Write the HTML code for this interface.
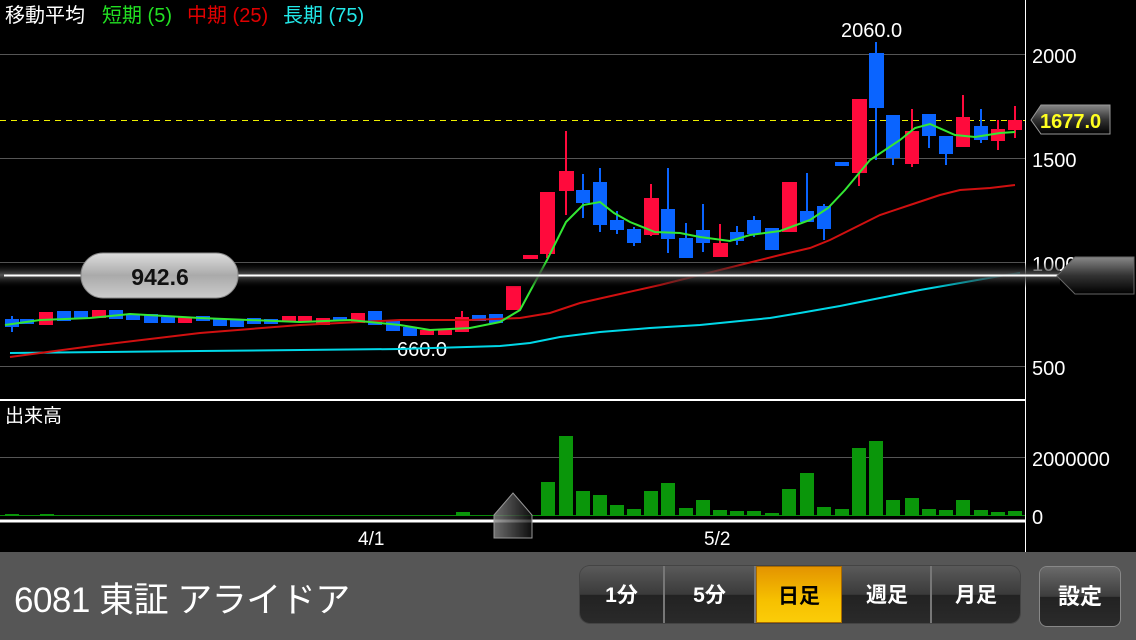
<!DOCTYPE html>
<html><head><meta charset="utf-8"><style>
html,body{margin:0;padding:0;background:#000;width:1136px;height:640px;overflow:hidden;font-family:"Liberation Sans","Noto Sans CJK JP",sans-serif}
.bar{position:absolute;left:0;top:552px;width:1136px;height:88px;background:#565656}
.title{position:absolute;left:14px;top:572px;color:#fff;font-size:35px;letter-spacing:-0.5px}
.grp{position:absolute;left:580px;top:566px;width:440px;height:57px;border-radius:10px;background:linear-gradient(#5a5a5a,#3a3a3a 50%,#222 51%,#2a2a2a);overflow:hidden;box-shadow:0 0 0 1px #444}
.seg{position:absolute;top:0;height:57px;color:#fff;font-size:21px;font-weight:bold;text-align:center;line-height:60px;border-right:2px solid #777;box-sizing:border-box}
.sel{background:linear-gradient(#e49400,#f6c000 60%,#fbcc08);color:#000;border:1px solid #a86a00}
.set{position:absolute;left:1040px;top:567px;width:80px;height:59px;border-radius:7px;background:linear-gradient(#6a6a6a,#3d3d3d 50%,#222 51%,#2b2b2b);color:#fff;font-size:22px;font-weight:bold;text-align:center;line-height:60px;box-shadow:0 0 0 1px #888}
</style></head><body>
<svg width="1136" height="552" style="position:absolute;left:0;top:0" font-family="Liberation Sans, Noto Sans CJK JP, sans-serif">
<text x="5" y="22" fill="#fff" font-size="20">移動平均</text>
<text x="102" y="22" fill="#22e022" font-size="20">短期 (5)</text>
<text x="187" y="22" fill="#e00000" font-size="20">中期 (25)</text>
<text x="283" y="22" fill="#22e8e8" font-size="20">長期 (75)</text>
<g stroke="#555" stroke-width="1">
<line x1="0" y1="54.5" x2="1025" y2="54.5"/><line x1="0" y1="158.5" x2="1025" y2="158.5"/>
<line x1="0" y1="262.5" x2="1025" y2="262.5"/><line x1="0" y1="366.5" x2="1025" y2="366.5"/>
<line x1="0" y1="457.5" x2="1025" y2="457.5"/>
</g>
<line x1="0" y1="120.5" x2="1025" y2="120.5" stroke="#f0f000" stroke-width="1" stroke-dasharray="6,5"/>
<line x1="1025.5" y1="0" x2="1025.5" y2="552" stroke="#fff" stroke-width="1"/>
<line x1="0" y1="400" x2="1025" y2="400" stroke="#fff" stroke-width="2"/>
<line x1="0" y1="521" x2="1025" y2="521" stroke="#fff" stroke-width="3"/>
<g fill="#fff" font-size="20">
<text x="1032" y="63">2000</text><text x="1032" y="167">1500</text><text x="1032" y="271">1000</text><text x="1032" y="375">500</text>
<text x="1032" y="466">2000000</text><text x="1032" y="524">0</text>
<text x="841" y="37">2060.0</text><text x="397" y="356">660.0</text>
<text x="5" y="422" font-size="19">出来高</text>
<text x="358" y="545" font-size="19">4/1</text><text x="704" y="545" font-size="19">5/2</text>
</g>
<g stroke-width="2">
<g fill="#0a64ff" stroke="#0a64ff">
<line x1="12" y1="316" x2="12" y2="332"/><rect x="6" y="320" width="12" height="6"/>
<rect x="21" y="320" width="12" height="3"/><rect x="58" y="312" width="12" height="8"/><rect x="75" y="312" width="12" height="6"/>
<rect x="110" y="311" width="12" height="7"/><rect x="127" y="315" width="12" height="4"/><rect x="145" y="315" width="12" height="7"/>
<rect x="162" y="318" width="12" height="4"/><rect x="197" y="317" width="12" height="3"/><rect x="214" y="320" width="12" height="5"/>
<rect x="231" y="320" width="12" height="6"/><rect x="248" y="319" width="12" height="4"/><rect x="265" y="320" width="12" height="3"/>
<rect x="334" y="318" width="12" height="2"/><rect x="369" y="312" width="12" height="12"/><rect x="387" y="322" width="12" height="8"/>
<rect x="404" y="328" width="12" height="7"/><rect x="473" y="316" width="12" height="4"/><rect x="490" y="315" width="12" height="7"/>
</g>
<g fill="#ff0a3c" stroke="#ff0a3c">
<rect x="40" y="313" width="12" height="11"/><rect x="93" y="311" width="12" height="6"/><rect x="179" y="318" width="12" height="4"/>
<rect x="283" y="317" width="12" height="4"/><rect x="299" y="317" width="12" height="4"/><rect x="317" y="319" width="12" height="5"/>
<rect x="352" y="314" width="12" height="8"/><rect x="421" y="331" width="12" height="3"/><rect x="439" y="331" width="12" height="3"/>
<line x1="462" y1="311" x2="462" y2="332"/><rect x="456" y="318" width="12" height="13"/>
<rect x="507" y="287" width="13" height="22"/><rect x="524" y="256" width="13" height="2"/>
<line x1="547" y1="193" x2="547" y2="258"/><rect x="541" y="193" width="13" height="60"/>
<line x1="566" y1="131" x2="566" y2="215"/><rect x="560" y="172" width="13" height="18"/>
<line x1="651" y1="184" x2="651" y2="236"/><rect x="645" y="199" width="13" height="35"/>
<line x1="720" y1="224" x2="720" y2="257"/><rect x="714" y="244" width="13" height="12"/>
<rect x="783" y="183" width="13" height="48"/>
<line x1="859" y1="100" x2="859" y2="186"/><rect x="853" y="100" width="13" height="72"/>
<line x1="912" y1="109" x2="912" y2="167"/><rect x="906" y="132" width="12" height="31"/>
<line x1="963" y1="95" x2="963" y2="146"/><rect x="957" y="118" width="12" height="28"/>
<line x1="998" y1="120" x2="998" y2="150"/><rect x="992" y="130" width="12" height="10"/>
<line x1="1015" y1="106" x2="1015" y2="138"/><rect x="1009" y="121" width="12" height="8"/>
</g>
<g fill="#0a64ff" stroke="#0a64ff">
<line x1="583" y1="174" x2="583" y2="218"/><rect x="577" y="191" width="12" height="11"/>
<line x1="600" y1="168" x2="600" y2="232"/><rect x="594" y="183" width="12" height="41"/>
<line x1="617" y1="211" x2="617" y2="234"/><rect x="611" y="221" width="12" height="8"/>
<line x1="634" y1="227" x2="634" y2="246"/><rect x="628" y="230" width="12" height="12"/>
<line x1="668" y1="168" x2="668" y2="253"/><rect x="662" y="210" width="12" height="28"/>
<line x1="686" y1="223" x2="686" y2="258"/><rect x="680" y="239" width="12" height="18"/>
<line x1="703" y1="204" x2="703" y2="252"/><rect x="697" y="231" width="12" height="11"/>
<line x1="737" y1="226" x2="737" y2="245"/><rect x="731" y="233" width="12" height="7"/>
<line x1="754" y1="216" x2="754" y2="237"/><rect x="748" y="221" width="12" height="12"/>
<rect x="766" y="229" width="12" height="20"/>
<line x1="807" y1="173" x2="807" y2="222"/><rect x="801" y="212" width="12" height="9"/>
<line x1="824" y1="204" x2="824" y2="240"/><rect x="818" y="207" width="12" height="21"/>
<rect x="836" y="163" width="12" height="2"/>
<line x1="876" y1="42" x2="876" y2="160"/><rect x="870" y="54" width="13" height="53"/>
<line x1="893" y1="116" x2="893" y2="165"/><rect x="887" y="116" width="12" height="41"/>
<line x1="929" y1="114" x2="929" y2="148"/><rect x="923" y="115" width="12" height="20"/>
<line x1="946" y1="137" x2="946" y2="165"/><rect x="940" y="137" width="12" height="16"/>
<line x1="981" y1="109" x2="981" y2="143"/><rect x="975" y="127" width="12" height="12"/>
</g>
</g>
<g fill="none" stroke-width="2">
<polyline stroke="#00d8e8" points="10,353 200,351 400,349 500,346 530,343 560,337 600,332 650,328 700,325 750,320 770,318 800,313 840,306 880,298 920,290 960,283 1000,276 1020,273"/>
<polyline stroke="#d01010" points="10,357 100,345 200,333 300,325 400,320 470,320 520,318 550,313 580,303 620,294 660,285 700,275 740,265 780,255 810,248 830,240 850,230 880,215 910,205 940,195 960,190 990,188 1015,185"/>
<polyline stroke="#33e833" points="5,325 40,320 90,318 130,314 200,318 300,322 350,320 400,325 430,330 470,328 500,322 520,310 547,260 566,222 583,205 600,202 614,213 630,222 655,232 680,233 700,237 730,241 750,235 780,231 810,220 828,208 845,190 870,160 900,140 915,128 930,124 955,135 975,137 1000,133 1015,132"/>
</g>
<line x1="0" y1="515.5" x2="1025" y2="515.5" stroke="#0a8a0a" stroke-width="1"/>
<g fill="#0a960a">
<rect x="5" y="514" width="14" height="2"/><rect x="40" y="514" width="14" height="2"/><rect x="456" y="512" width="14" height="4"/>
<rect x="541" y="482" width="14" height="34"/><rect x="559" y="436" width="14" height="80"/><rect x="576" y="491" width="14" height="25"/>
<rect x="593" y="495" width="14" height="21"/><rect x="610" y="505" width="14" height="11"/><rect x="627" y="509" width="14" height="7"/>
<rect x="644" y="491" width="14" height="25"/><rect x="661" y="483" width="14" height="33"/><rect x="679" y="508" width="14" height="8"/>
<rect x="696" y="500" width="14" height="16"/><rect x="713" y="510" width="14" height="6"/><rect x="730" y="511" width="14" height="5"/>
<rect x="747" y="511" width="14" height="5"/><rect x="765" y="513" width="14" height="3"/><rect x="782" y="489" width="14" height="27"/>
<rect x="800" y="473" width="14" height="43"/><rect x="817" y="507" width="14" height="9"/><rect x="835" y="509" width="14" height="7"/>
<rect x="852" y="448" width="14" height="68"/><rect x="869" y="441" width="14" height="75"/><rect x="886" y="500" width="14" height="16"/>
<rect x="905" y="498" width="14" height="18"/><rect x="922" y="509" width="14" height="7"/><rect x="939" y="510" width="14" height="6"/>
<rect x="956" y="500" width="14" height="16"/><rect x="974" y="510" width="14" height="6"/><rect x="991" y="512" width="14" height="4"/>
<rect x="1008" y="511" width="14" height="5"/>
</g>
<defs>
<linearGradient id="gl" x1="0" y1="0" x2="0" y2="1"><stop offset="0" stop-color="#000" stop-opacity="0"/><stop offset="0.5" stop-color="#555"/><stop offset="1" stop-color="#000" stop-opacity="0"/></linearGradient>
<linearGradient id="pill" x1="0" y1="0" x2="0" y2="1"><stop offset="0" stop-color="#ddd"/><stop offset="0.5" stop-color="#aaa"/><stop offset="1" stop-color="#ccc"/></linearGradient>
<linearGradient id="tag" x1="0" y1="0" x2="0" y2="1"><stop offset="0" stop-color="#888"/><stop offset="0.5" stop-color="#333"/><stop offset="1" stop-color="#000"/></linearGradient>
<linearGradient id="mk" x1="0" y1="0" x2="1" y2="0"><stop offset="0" stop-color="#888"/><stop offset="1" stop-color="#111"/></linearGradient>
</defs>
<rect x="0" y="262" width="1060" height="26" fill="url(#gl)"/>
<line x1="4" y1="275.5" x2="1060" y2="275.5" stroke="#fff" stroke-width="2"/>
<rect x="81" y="253" width="157" height="45" rx="22" fill="url(#pill)" stroke="#888"/>
<text x="160" y="285" fill="#111" font-size="23" font-weight="bold" text-anchor="middle">942.6</text>
<polygon points="1057,276 1075,257 1134,257 1134,294 1075,294" fill="url(#tag)" stroke="#666"/>
<polygon points="1031,120 1041,105 1110,105 1110,134 1041,134" fill="url(#tag)" stroke="#999"/>
<text x="1040" y="128" fill="#ffff20" font-size="20" font-weight="bold">1677.0</text>
<polygon points="494,515 513,493 532,515 532,538 494,538" fill="url(#mk)" fill-opacity="0.8" stroke="#999"/>
</svg>
<div class="bar"></div>
<div class="title">6081 東証 アライドア</div>
<div class="grp">
<div class="seg" style="left:0;width:85px">1分</div>
<div class="seg" style="left:85px;width:91px">5分</div>
<div class="seg sel" style="left:176px;width:86px">日足</div>
<div class="seg" style="left:264px;width:88px">週足</div>
<div class="seg" style="left:352px;width:88px;border-right:none">月足</div>
</div>
<div class="set">設定</div>
</body></html>
